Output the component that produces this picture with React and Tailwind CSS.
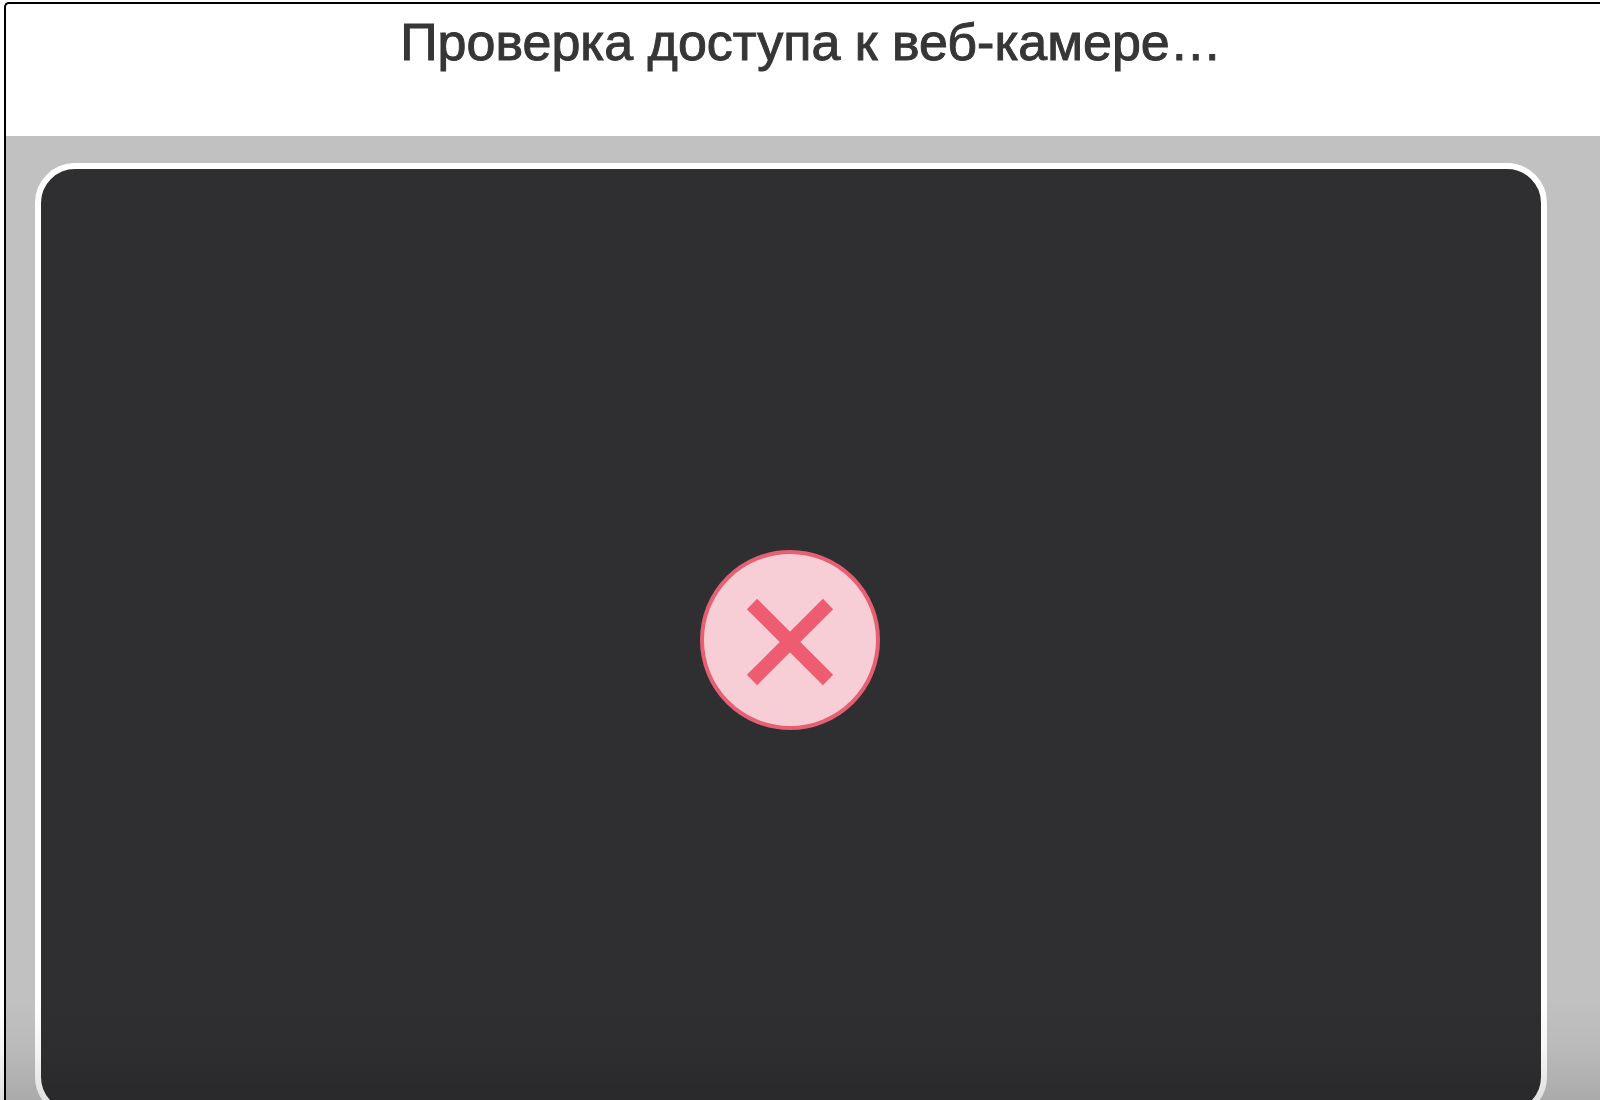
import React from 'react';

const CrossIcon = () => (
  <svg viewBox="0 0 180 180" className="h-[180px] w-[180px]" role="img" aria-label="Нет доступа">
    <circle cx="90" cy="90" r="88" fill="#f7ced6" stroke="#e65f73" strokeWidth="4" />
    <path d="M52 54 L128 130 M128 54 L52 130" stroke="#ed5c71" strokeWidth="14.5" fill="none" />
  </svg>
);

const CameraPreview = () => (
  <div className="flex aspect-[1512/954] items-center justify-center rounded-[40px] border-6 border-white bg-[#2f2f31] pr-[2px]">
    <CrossIcon />
  </div>
);

const App = () => {
  return (
    <div className="relative h-screen overflow-hidden bg-white pt-[2px] pl-1 font-['Liberation_Sans',Arial,sans-serif]">
      <main className="min-h-screen overflow-hidden rounded-tl-[5px] border-t-2 border-l-2 border-black">
        <header className="h-[132px] pt-2 pl-4 text-center">
          <h1 className="text-[52px] leading-[60px] text-[#363636] [-webkit-text-stroke:1px_#363636]">
            Проверка доступа к веб-камере…
          </h1>
        </header>
        <section className="bg-[#c1c1c1] pt-[27px] pr-[53px] pb-8 pl-[29px]">
          <CameraPreview />
        </section>
      </main>
      {/* shade along the bottom edge */}
      <div className="pointer-events-none absolute inset-x-0 bottom-0 h-[100px] bg-linear-to-b from-transparent via-black/4 to-black/12"></div>
    </div>
  );
};

export default App;
